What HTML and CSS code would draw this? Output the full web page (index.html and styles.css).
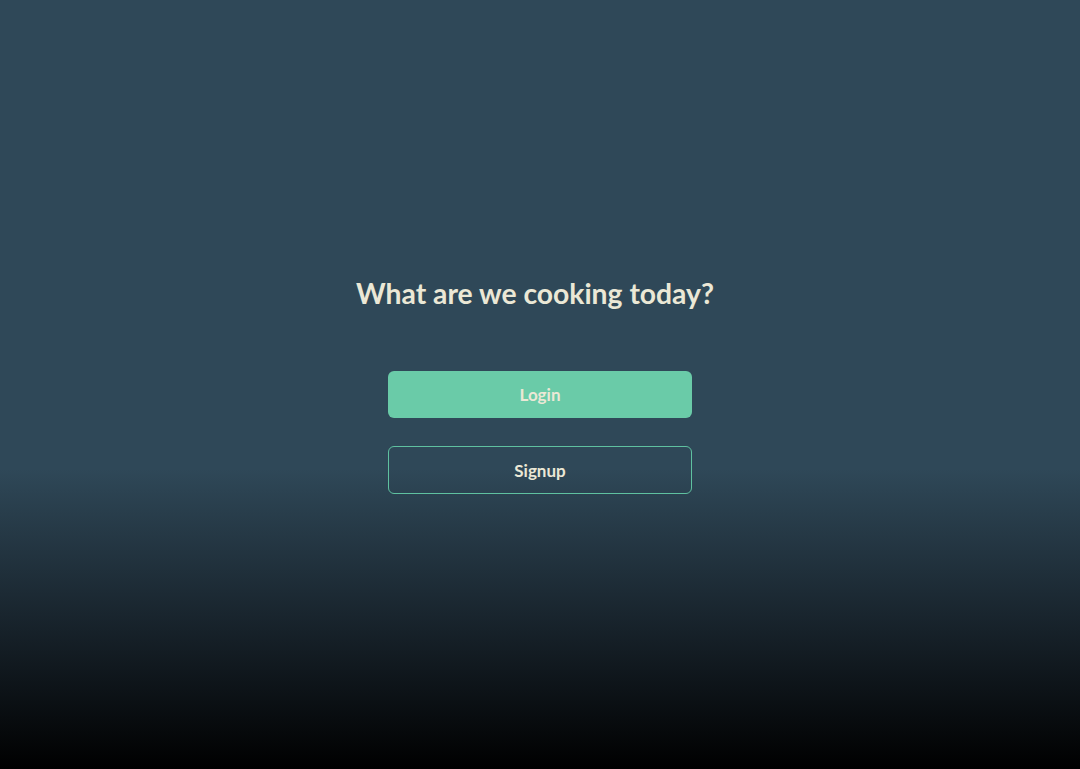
FILE: index.html
```html
<!DOCTYPE html>
<html lang="en">
<head>
<meta charset="utf-8">
<title>What are we cooking today?</title>
<link rel="stylesheet" href="styles.css">
</head>
<body>
<main class="page">
  <section class="welcome">
    <h1 class="welcome-title">What are we cooking today?</h1>
    <div class="actions">
      <button class="btn btn-primary" type="button">Login</button>
      <button class="btn btn-outline" type="button">Signup</button>
    </div>
  </section>
</main>
</body>
</html>
```
FILE: styles.css
```css
html, body {
  margin: 0;
  padding: 0;
  height: 100%;
}
body {
  background: linear-gradient(to bottom, #2f4858 0%, #2f4858 61%, #19252e 80%, #000 100%);
  font-family: "Lato", "Open Sans", sans-serif;
  color: #ebe8d6;
}
.page {
  height: 769px;
  display: flex;
  align-items: center;
  justify-content: center;
}
.welcome {
  display: flex;
  flex-direction: column;
  align-items: center;
}
.welcome-title {
  margin: 0 0 60px;
  padding-right: 10px;
  font-size: 28.3px;
  line-height: 36px;
  font-weight: 700;
  color: #ebe8d6;
}
.actions {
  display: flex;
  flex-direction: column;
  gap: 28px;
}
.btn {
  width: 304px;
  font-family: "Lato", "Open Sans", sans-serif;
  font-size: 17px;
  font-weight: 700;
  color: #ebe8d6;
  border-radius: 6px;
  cursor: pointer;
}
.btn-primary {
  height: 47px;
  background: #6acba8;
  border: none;
}
.btn-outline {
  height: 48px;
  background: transparent;
  border: 1px solid #5fc1a0;
}
```
